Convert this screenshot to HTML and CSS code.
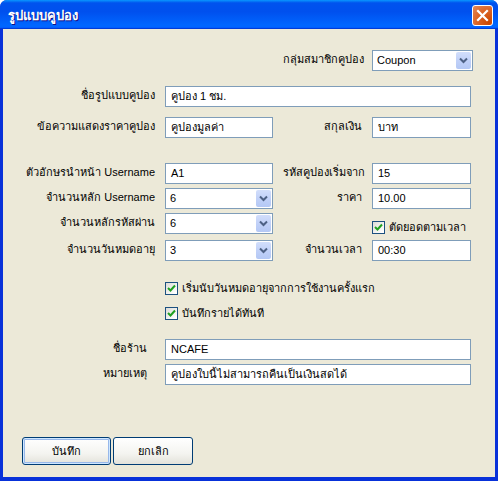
FILE: index.html
```html
<!DOCTYPE html>
<html>
<head>
<meta charset="utf-8">
<link rel="stylesheet" href="styles.css">
</head>
<body>
<div class="window">
  <div class="titlebar">
    <span class="title">รูปแบบคูปอง</span>
    <span class="close"><svg width="13" height="13" viewBox="0 0 13 13"><path d="M2 2 L11 11 M11 2 L2 11" stroke="#fff" stroke-width="2.2" stroke-linecap="square"/></svg></span>
  </div>
  <div class="body">
    <div class="row r1">
      <span class="lbl c3">กลุ่มสมาชิกคูปอง</span>
      <div class="select c4 wide">Coupon<span class="arrow"><svg width="9" height="7" viewBox="0 0 9 7"><path d="M1 1.5 L4.5 5 L8 1.5" fill="none" stroke="#4D6185" stroke-width="2"/></svg></span></div>
    </div>
    <div class="row r2">
      <span class="lbl c1">ชื่อรูปแบบคูปอง</span>
      <div class="input span">คูปอง 1 ชม.</div>
    </div>
    <div class="row r3">
      <span class="lbl c1">ข้อความแสดงราคาคูปอง</span>
      <div class="input c2">คูปองมูลค่า</div>
      <span class="lbl c3">สกุลเงิน</span>
      <div class="input c4">บาท</div>
    </div>
    <div class="row r4">
      <span class="lbl c1">ตัวอักษรนำหน้า Username</span>
      <div class="input c2">A1</div>
      <span class="lbl c3">รหัสคูปองเริ่มจาก</span>
      <div class="input c4">15</div>
    </div>
    <div class="row r5">
      <span class="lbl c1">จำนวนหลัก Username</span>
      <div class="select c2">6<span class="arrow"><svg width="9" height="7" viewBox="0 0 9 7"><path d="M1 1.5 L4.5 5 L8 1.5" fill="none" stroke="#4D6185" stroke-width="2"/></svg></span></div>
      <span class="lbl c3">ราคา</span>
      <div class="input c4">10.00</div>
    </div>
    <div class="row r6">
      <span class="lbl c1">จำนวนหลักรหัสผ่าน</span>
      <div class="select c2">6<span class="arrow"><svg width="9" height="7" viewBox="0 0 9 7"><path d="M1 1.5 L4.5 5 L8 1.5" fill="none" stroke="#4D6185" stroke-width="2"/></svg></span></div>
      <label class="check c4 bottom"><span class="box"><svg width="9" height="9" viewBox="0 0 9 9"><path d="M1 4 L3.5 6.5 L8 1.5" fill="none" stroke="#21A121" stroke-width="2"/></svg></span>ตัดยอดตามเวลา</label>
    </div>
    <div class="row r7">
      <span class="lbl c1">จำนวนวันหมดอายุ</span>
      <div class="select c2">3<span class="arrow"><svg width="9" height="7" viewBox="0 0 9 7"><path d="M1 1.5 L4.5 5 L8 1.5" fill="none" stroke="#4D6185" stroke-width="2"/></svg></span></div>
      <span class="lbl c3">จำนวนเวลา</span>
      <div class="input c4">00:30</div>
    </div>
    <div class="row r8">
      <label class="check span"><span class="box"><svg width="9" height="9" viewBox="0 0 9 9"><path d="M1 4 L3.5 6.5 L8 1.5" fill="none" stroke="#21A121" stroke-width="2"/></svg></span>เริ่มนับวันหมดอายุจากการใช้งานครั้งแรก</label>
    </div>
    <div class="row r9">
      <label class="check span"><span class="box"><svg width="9" height="9" viewBox="0 0 9 9"><path d="M1 4 L3.5 6.5 L8 1.5" fill="none" stroke="#21A121" stroke-width="2"/></svg></span>บันทึกรายได้ทันที</label>
    </div>
    <div class="row r10">
      <span class="lbl c1 inset">ชื่อร้าน</span>
      <div class="input span">NCAFE</div>
    </div>
    <div class="row r11">
      <span class="lbl c1 inset">หมายเหตุ</span>
      <div class="input span">คูปองใบนี้ไม่สามารถคืนเป็นเงินสดได้</div>
    </div>
    <div class="buttons">
      <button class="btn default">บันทึก</button>
      <button class="btn cancel">ยกเลิก</button>
    </div>
  </div>
</div>
</body>
</html>
```

FILE: styles.css
```css
html, body {
  margin: 0;
  padding: 0;
  background: #ffffff;
}
body {
  font-family: Tahoma, "Liberation Sans", "DejaVu Sans", sans-serif;
  font-size: 11px;
  color: #000;
}
.window {
  width: 498px;
  height: 481px;
  display: flex;
  flex-direction: column;
  background: #0831D9;
  border-radius: 7px 7px 0 0;
  overflow: hidden;
}
.titlebar {
  height: 29px;
  flex: none;
  display: flex;
  align-items: center;
  justify-content: space-between;
  padding: 0 5px 0 8px;
  background: linear-gradient(to bottom, #0997FF 0%, #0053EE 10%, #0050EE 40%, #0066FF 86%, #0066FF 92%, #005BFF 95%, #003DD7 97%, #003DD7 100%);
}
.title {
  color: #fff;
  font-family: "Trebuchet MS", "DejaVu Sans", sans-serif;
  font-weight: bold;
  font-size: 13px;
  text-shadow: 1px 1px 0 #0F1089;
  padding-top: 1px;
}
.close {
  width: 19px;
  height: 19px;
  border: 1px solid #fff;
  border-radius: 3px;
  background: radial-gradient(circle at 85% 85%, #CC4600 0%, #DC6527 55%, #E38A5C 100%);
  display: flex;
  align-items: center;
  justify-content: center;
  margin-top: 1px;
}
.body {
  flex: 1;
  background: #ECE9D8;
  margin: 0 3px 4px 3px;
  padding: 21px 0 0 5px;
  display: flex;
  flex-direction: column;
}
.row {
  display: grid;
  grid-template-columns: 147px 108px 79px 99px;
  column-gap: 10px;
  height: 21px;
}
.r2 { margin-top: 15px; }
.r3 { margin-top: 10px; }
.r4 { margin-top: 25px; }
.r5 { margin-top: 4px; }
.r6 { margin-top: 4px; }
.r7 { margin-top: 6px; }
.r8 { margin-top: 17px; }
.r9 { margin-top: 4px; }
.r10 { margin-top: 15px; }
.r11 { margin-top: 4px; }
.c1 { grid-column: 1; }
.c2 { grid-column: 2; }
.c3 { grid-column: 3; }
.c4 { grid-column: 4; }
.span { grid-column: 2 / 5; }
.lbl {
  text-align: right;
  white-space: nowrap;
  padding-top: 3px;
  line-height: 13px;
}
.lbl.inset { padding-right: 8px; }
.input, .select {
  box-sizing: border-box;
  height: 21px;
  border: 1px solid #7F9DB9;
  background: #fff;
  padding: 0 5px;
  line-height: 19px;
  white-space: nowrap;
  overflow: hidden;
}
.select {
  position: relative;
  padding-left: 4px;
}
.select.wide { width: 101px; }
.arrow {
  position: absolute;
  right: 1px;
  top: 1px;
  width: 15px;
  height: 17px;
  border-radius: 2px;
  background: linear-gradient(to bottom, #D2DEFB 0%, #C1D1F8 50%, #B4C8F5 100%);
  border: 0 solid #B9CBF3;
  display: flex;
  align-items: center;
  justify-content: center;
}
.check {
  display: flex;
  align-items: center;
  gap: 4px;
  white-space: nowrap;
  line-height: 13px;
}
.check.bottom {
  align-self: end;
}
.box {
  box-sizing: border-box;
  width: 13px;
  height: 13px;
  border: 1px solid #1C5180;
  background: linear-gradient(135deg, #DCDCD7 0%, #FFFFFF 90%);
  display: flex;
  align-items: center;
  justify-content: center;
  flex: none;
}
.buttons {
  display: flex;
  gap: 2px;
  margin-top: 52px;
  padding-left: 14px;
}
.btn {
  box-sizing: border-box;
  height: 28px;
  border: 1px solid #003C74;
  border-radius: 3px;
  background: linear-gradient(to bottom, #FFFFFF 0%, #F4F4F0 60%, #E3E2DA 100%);
  font-family: Tahoma, "Liberation Sans", "DejaVu Sans", sans-serif;
  font-size: 11px;
  color: #000;
  padding: 0;
}
.btn.default {
  width: 89px;
  box-shadow: inset 0 0 0 1px #CEE7FF, inset 0 0 0 2px #98B8EA;
}
.btn.cancel {
  width: 80px;
}
```
